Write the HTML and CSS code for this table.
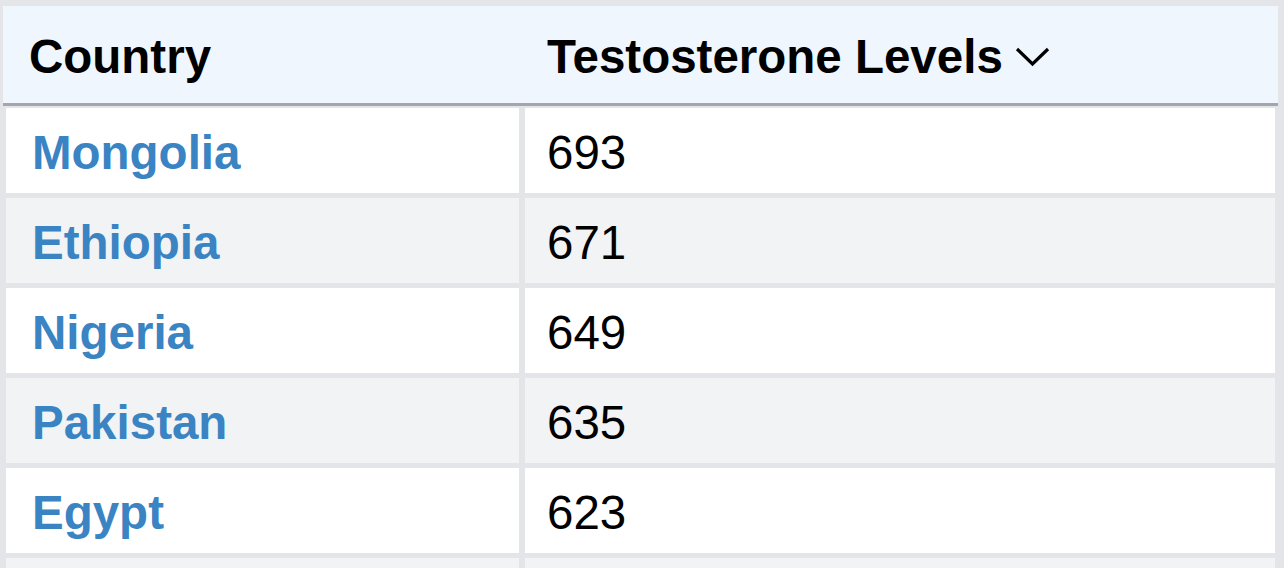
FILE: index.html
```html
<!DOCTYPE html>
<html>
<head>
<meta charset="utf-8">
<link rel="stylesheet" href="styles.css">
</head>
<body>
<div class="table">
  <div class="head">
    <div class="hcell c1">Country</div>
    <div class="hcell c2">Testosterone Levels
      <svg class="chev" width="35" height="20" viewBox="0 0 35 20"><path d="M2 2 L17.5 17 L33 2" fill="none" stroke="#000" stroke-width="3.2"/></svg>
    </div>
  </div>
  <div class="row"><div class="cell c1"><a class="link">Mongolia</a></div><div class="cell c2">693</div></div>
  <div class="row alt"><div class="cell c1"><a class="link">Ethiopia</a></div><div class="cell c2">671</div></div>
  <div class="row"><div class="cell c1"><a class="link">Nigeria</a></div><div class="cell c2">649</div></div>
  <div class="row alt"><div class="cell c1"><a class="link">Pakistan</a></div><div class="cell c2">635</div></div>
  <div class="row"><div class="cell c1"><a class="link">Egypt</a></div><div class="cell c2">623</div></div>
  <div class="row alt"><div class="cell c1"></div><div class="cell c2"></div></div>
</div>
</body>
</html>
```
FILE: styles.css
```css
html, body {
  margin: 0;
  padding: 0;
  background: #e4e5e9;
  overflow: hidden;
}
body {
  font-family: "Liberation Sans", Arial, Helvetica, sans-serif;
  width: 1284px;
  height: 568px;
}
.table {
  padding-top: 6px;
  display: flex;
  flex-direction: column;
  gap: 5px;
}
.head {
  margin: 0 6px 0 3px;
  height: 97px;
  background: #eff6fd;
  border-bottom: 3px solid #a3a6ad;
  display: grid;
  grid-template-columns: 516px 1fr;
  align-items: center;
  margin-bottom: -3px;
}
.hcell {
  font-weight: bold;
  font-size: 47.5px;
  color: #000;
  display: flex;
  align-items: center;
  padding-top: 4px;
}
.head .c1 { padding-left: 26px; }
.head .c2 { padding-left: 28px; }
.chev { margin-left: 12px; margin-top: 0; }
.row {
  margin: 0 9px 0 6px;
  height: 85px;
  display: grid;
  grid-template-columns: 513px 1fr;
  column-gap: 6px;
}
.cell {
  background: #fff;
  display: flex;
  align-items: center;
  font-size: 47.5px;
  color: #000;
  padding-top: 3px;
}
.row.alt .cell { background: #f2f3f5; }
.row .c1 { padding-left: 26px; }
.row .c2 { padding-left: 22px; }
.link {
  color: #3a84c3;
  font-weight: bold;
}
```
